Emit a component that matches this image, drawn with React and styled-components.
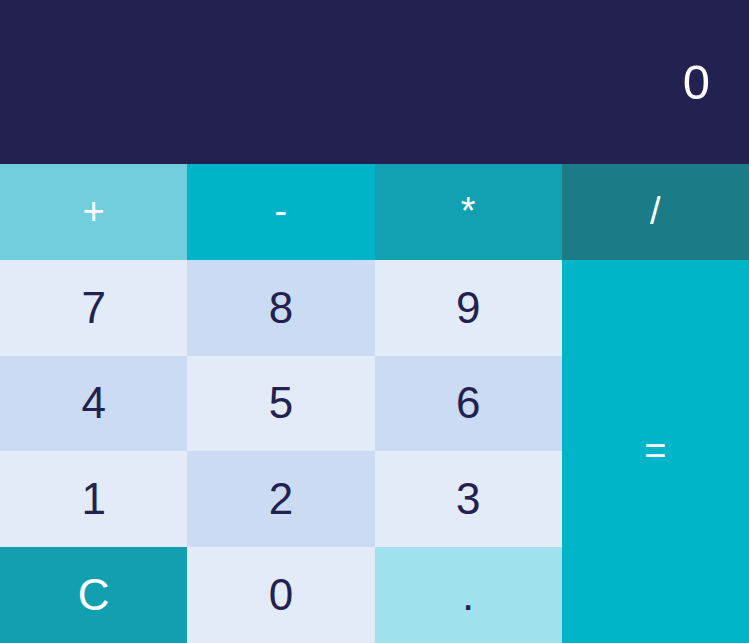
import React, { useState } from 'react'
import styled, { createGlobalStyle } from 'styled-components'

const GlobalStyle = createGlobalStyle`
  html, body {
    margin: 0;
    padding: 0;
    background: #ffffff;
    font-family: "Liberation Sans", Arial, sans-serif;
  }
`

const Wrapper = styled.div`
  display: grid;
  grid-template-rows: 164px 1fr;
  height: 100vh;
  width: 100vw;
`

const Display = styled.div`
  background-color: #22214f;
  color: #ffffff;
  display: flex;
  align-items: center;
  justify-content: flex-end;
  padding-right: 39px;
  font-size: 49px;
`

const Keys = styled.div`
  display: grid;
  grid-template-columns: repeat(4, 1fr);
  grid-template-rows: repeat(5, 1fr);
`

const Key = styled.button`
  border: none;
  margin: 0;
  padding: 0;
  font-family: "Liberation Sans", Arial, sans-serif;
  font-size: ${p => (p.$op ? '38px' : '44px')};
  color: ${p => (p.$dark ? '#22214f' : '#ffffff')};
  background-color: ${p => p.$bg};
  grid-row: ${p => p.$span ? 'span 4' : 'auto'};
  display: flex;
  align-items: center;
  justify-content: center;
  cursor: pointer;
`

const LIGHT = '#e2ebf7'
const ALT = '#cadbf3'

const keys = [
  { label: '+', bg: '#72cddd', op: true },
  { label: '-', bg: '#00b4c8', op: true },
  { label: '*', bg: '#11a1b3', op: true },
  { label: '/', bg: '#1b7c87', op: true },
  { label: '7', bg: LIGHT, dark: true },
  { label: '8', bg: ALT, dark: true },
  { label: '9', bg: LIGHT, dark: true },
  { label: '=', bg: '#00b5c8', op: true, span: true },
  { label: '4', bg: ALT, dark: true },
  { label: '5', bg: LIGHT, dark: true },
  { label: '6', bg: ALT, dark: true },
  { label: '1', bg: LIGHT, dark: true },
  { label: '2', bg: ALT, dark: true },
  { label: '3', bg: LIGHT, dark: true },
  { label: 'C', bg: '#12a0b0' },
  { label: '0', bg: LIGHT, dark: true },
  { label: '.', bg: '#9fe2ee', dark: true },
]

const App = () => {
  const [value] = useState('0')
  return (
    <>
      <GlobalStyle />
      <Wrapper>
        <Display>{value}</Display>
        <Keys>
          {keys.map(k => (
            <Key key={k.label} $bg={k.bg} $dark={k.dark} $op={k.op} $span={k.span}>
              {k.label}
            </Key>
          ))}
        </Keys>
      </Wrapper>
    </>
  )
}

export default App
